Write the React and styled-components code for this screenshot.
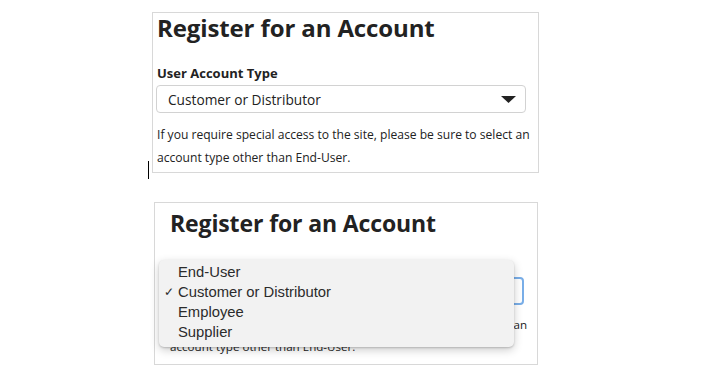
import React from "react";
import styled, { createGlobalStyle } from "styled-components";

const GlobalStyle = createGlobalStyle`
  html, body {
    margin: 0;
    padding: 0;
    background: #ffffff;
  }
  body {
    font-family: "Open Sans", Lato, sans-serif;
    color: #222;
  }
`;

const Page = styled.div`
  display: flex;
  flex-direction: column;
  align-items: flex-start;
  gap: 29px;
  padding: 12px 0 0 152px;
`;

const Card = styled.div`
  position: relative;
  box-sizing: border-box;
  width: ${(p) => p.$w}px;
  margin-left: ${(p) => p.$shift || 0}px;
  padding: ${(p) => p.$pad};
  border: 1px solid #d8d8d8;
  background: #fff;
`;

const Title = styled.h1`
  margin: 0;
  font-size: ${(p) => p.$size}px;
  line-height: ${(p) => p.$size + 4}px;
  font-weight: 700;
  color: #222;
  letter-spacing: -0.12px;
`;

const Label = styled.div`
  margin-top: ${(p) => p.$top}px;
  font-size: 13px;
  line-height: 18px;
  font-weight: 700;
  color: #222;
`;

const Select = styled.div`
  box-sizing: border-box;
  display: flex;
  align-items: center;
  justify-content: space-between;
  width: ${(p) => p.$w}px;
  height: 28px;
  margin-top: ${(p) => p.$top}px;
  margin-left: ${(p) => p.$left || 0}px;
  padding: 0 9px 0 11px;
  border: ${(p) => (p.$focus ? "2px solid #79aee8" : "1px solid #d2d2d2")};
  border-radius: 4px;
  font-size: 13.7px;
  color: #222;
  background: #fff;
`;

const Note = styled.p`
  margin: ${(p) => p.$top}px 0 0;
  font-size: ${(p) => p.$size}px;
  line-height: ${(p) => p.$lh}px;
  color: #222;
`;

const Caret = styled.span`
  position: absolute;
  left: -5px;
  top: 148px;
  width: 1px;
  height: 18px;
  background: #000;
`;

const Menu = styled.ul`
  position: absolute;
  left: 4px;
  top: 57px;
  box-sizing: border-box;
  width: 355px;
  height: 87px;
  margin: 0;
  padding: 2px 0 0;
  list-style: none;
  background: #f2f2f2;
  border-radius: 5px;
  box-shadow: 0 1px 2px rgba(0, 0, 0, 0.18), 0 3px 10px rgba(0, 0, 0, 0.2);
  font-family: "Liberation Sans", Arial, sans-serif;
  font-size: 14.8px;
  color: #2b2b2b;
`;

const Option = styled.li`
  position: relative;
  height: 20px;
  line-height: 20px;
  padding-left: 19px;
`;

const Check = styled.span`
  position: absolute;
  left: 5px;
  top: 0;
  font-size: 12px;
`;

const Arrow = () => (
  <svg width="15" height="7" viewBox="0 0 15 7">
    <path d="M0 0 H15 L7.5 7 Z" fill="#222" />
  </svg>
);

const options = ["End-User", "Customer or Distributor", "Employee", "Supplier"];

export default function App() {
  return (
    <>
      <GlobalStyle />
      <Page>
        <Card $w={387} $pad="1px 2px 3px 4px">
          <Title $size={24}>Register for an Account</Title>
          <Label $top={22}>User Account Type</Label>
          <Select $w={370} $top={3} $left={-1}>
            <span>Customer or Distributor</span>
            <Arrow />
          </Select>
          <Note $top={10} $size={12.1} $lh={23}>
            If you require special access to the site, please be sure to select an
            account type other than End-User.
          </Note>
          <Caret />
        </Card>

        <Card $w={384} $shift={2} $pad="7px 4px 6px 15px">
          <Title $size={23}>Register for an Account</Title>
          <Label $top={20}>User Account Type</Label>
          <Select $w={354} $focus $top={2}>
            <span>Customer or Distributor</span>
            <Arrow />
          </Select>
          <Note $top={9} $size={11.6} $lh={22}>
            If you require special access to the site, please be sure to select an
            account type other than End-User.
          </Note>
          <Menu>
            {options.map((o) => (
              <Option key={o}>
                {o === "Customer or Distributor" && <Check>✓</Check>}
                {o}
              </Option>
            ))}
          </Menu>
        </Card>
      </Page>
    </>
  );
}
